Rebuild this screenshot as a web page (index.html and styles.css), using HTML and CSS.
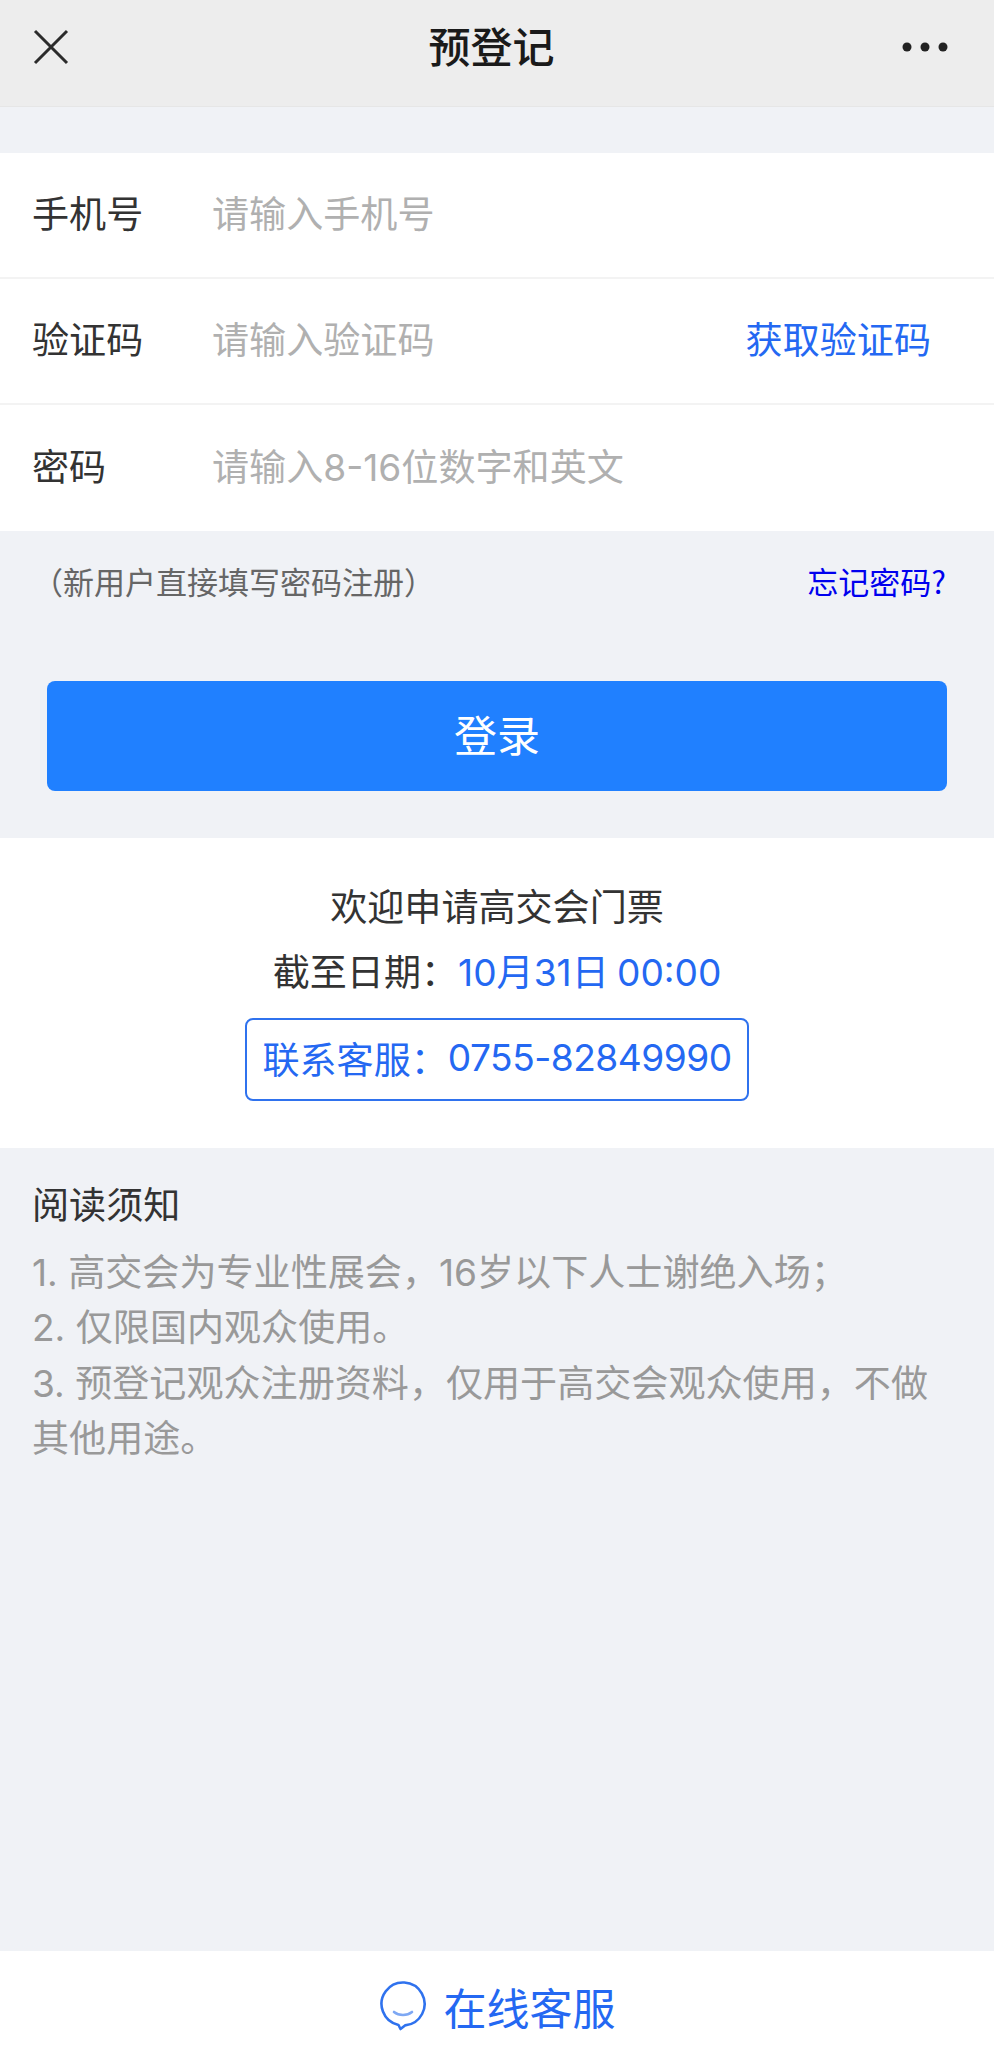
FILE: index.html
```html
<!DOCTYPE html>
<html lang="zh-CN">
<head>
<meta charset="utf-8">
<title>预登记</title>
<link rel="stylesheet" href="styles.css">
</head>
<body>
<div class="page">
  <header class="nav">
    <svg class="nav-close" viewBox="0 0 36 36" width="36" height="36"><path d="M2 2 L34 34 M34 2 L2 34" fill="none" stroke="#2b2b2b" stroke-width="3"/></svg>
    <h1 class="nav-title">预登记</h1>
    <svg class="nav-more" viewBox="0 0 46 10" width="46" height="10"><circle cx="5" cy="5" r="4.500" fill="#222"/><circle cx="23" cy="5" r="4.500" fill="#222"/><circle cx="41" cy="5" r="4.500" fill="#222"/></svg>
  </header>

  <section class="form">
    <div class="row"><span class="label">手机号</span><span class="placeholder">请输入手机号</span></div>
    <div class="row"><span class="label">验证码</span><span class="placeholder">请输入验证码</span><span class="code-link">获取验证码</span></div>
    <div class="row"><span class="label">密码</span><span class="placeholder">请输入<span class="num">8-16</span>位数字和英文</span></div>
  </section>

  <div class="hint"><span class="hint-text">（新用户直接填写密码注册）</span><span class="forgot">忘记密码?</span></div>
  <div class="action"><button class="login">登录</button></div>

  <section class="info">
    <p class="info-line">欢迎申请高交会门票</p>
    <p class="info-line">截至日期：<span class="blue"><span class="num">10</span>月<span class="num">31</span>日 <span class="num">00:00</span></span></p>
    <div class="contact">联系客服：<span class="num phone">0755-82849990</span></div>
  </section>

  <section class="notice">
    <h2 class="notice-title">阅读须知</h2>
    <p class="notice-line">1. 高交会为专业性展会，16岁以下人士谢绝入场；</p>
    <p class="notice-line">2. 仅限国内观众使用。</p>
    <p class="notice-line">3. 预登记观众注册资料，仅用于高交会观众使用，不做其他用途。</p>
  </section>

  <footer class="footer">
    <svg class="footer-icon" viewBox="0 0 48 52" width="48" height="52"><path d="M19.500 45A21.500 21.500 0 1 1 26 45.400L21.500 49Z" fill="none" stroke="#2f72ee" stroke-width="2.600" stroke-linejoin="round"/><path d="M15 32c5 4 13 4 18 0" fill="none" stroke="#7ea8f3" stroke-width="2.600" stroke-linecap="round"/></svg>
    <span class="footer-text">在线客服</span>
  </footer>
</div>
</body>
</html>
```
FILE: styles.css
```css
* { box-sizing: border-box; }
html, body { margin: 0; padding: 0; }
body {
  font-family: "Noto Sans CJK SC", "Noto Sans", sans-serif;
  color: #333;
  background: #f0f2f6;
}
.page {
  width: 994px;
  height: 2065px;
  display: flex;
  flex-direction: column;
  background: #f0f2f6;
}
p, h1, h2 { margin: 0; font-weight: 400; }
.num { font-family: Inter, "Noto Sans", sans-serif; line-height: 1; }
.phone { letter-spacing: -0.5px; }

.nav {
  flex: none;
  height: 107px;
  padding: 0 46px 13px 33px;
  display: flex;
  align-items: center;
  justify-content: space-between;
  background: #ededed;
  border-bottom: 1px solid #e6e6e6;
}
.nav-close { display: block; }
.nav-title {
  font-size: 42px;
  font-weight: 500;
  line-height: 56px;
  color: #1a1a1a;
  margin: 0 0 4px 12px;
}
.nav-more { display: block; }

.form { flex: none; margin-top: 46px; background: #fff; }
.row {
  height: 126px;
  padding: 0 63px 7px 32px;
  display: flex;
  align-items: center;
  font-size: 37.1px;
  border-bottom: 2px solid #f3f3f3;
}
.row:last-child { height: 126px; border-bottom: 0; }
.label { width: 180px; flex: none; color: #333; }
.placeholder { flex: 1; color: #b0b0b0; }
.code-link { color: #2468f2; }

.hint {
  flex: none;
  height: 78px;
  padding: 20px 48px 0 32px;
  display: flex;
  align-items: center;
  justify-content: space-between;
  font-size: 31px;
}
.hint-text { color: #666; }
.forgot { color: #0000ee; }

.action { flex: none; padding: 72px 47px 47px; }
.login {
  display: block;
  width: 100%;
  height: 110px;
  padding: 0 0 7px;
  border: 0;
  border-radius: 8px;
  background: #2080ff;
  color: #fff;
  font-family: inherit;
  font-size: 43px;
}

.info {
  flex: none;
  height: 310px;
  padding-top: 35px;
  display: flex;
  flex-direction: column;
  align-items: center;
  background: #fff;
  font-size: 37.1px;
}
.info-line { line-height: 65px; }
.blue { color: #2468f2; }
.contact {
  width: 504px;
  height: 83px;
  margin-top: 15px;
  padding-bottom: 4px;
  display: flex;
  align-items: center;
  justify-content: center;
  border: 2px solid #2f72ee;
  border-radius: 8px;
  color: #2468f2;
  white-space: nowrap;
}

.notice {
  flex: 1;
  padding: 28px 50px 0 32px;
  font-size: 37.1px;
}
.notice-title { font-size: 37.1px; line-height: 55px; margin-bottom: 13.5px; color: #333; }
.notice-line {
  font-family: Inter, "Noto Sans CJK SC", sans-serif;
  line-height: 55.5px;
  color: #999;
}

.footer {
  flex: none;
  height: 114px;
  padding-bottom: 5px;
  display: flex;
  align-items: center;
  justify-content: center;
  gap: 17px;
  background: #fff;
}
.footer-icon { display: block; }
.footer-text { font-size: 43px; color: #2468f2; }
```
